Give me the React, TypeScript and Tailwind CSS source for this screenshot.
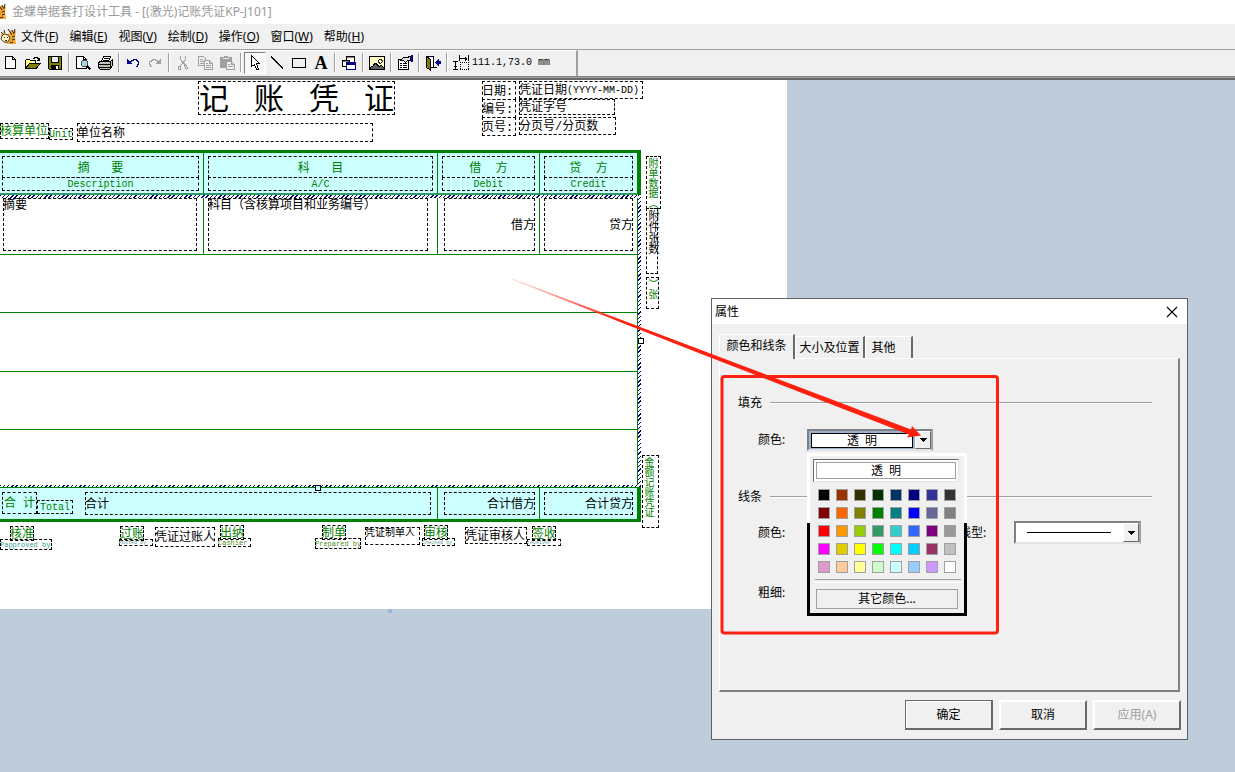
import React, { useState } from "react";
import clsx from "clsx";

const menus = [
  ["文件", "F"],
  ["编辑", "E"],
  ["视图", "V"],
  ["绘制", "D"],
  ["操作", "O"],
  ["窗口", "W"],
  ["帮助", "H"],
];

const swatches = [
  "bg-[#000000]", "bg-[#993300]", "bg-[#333300]", "bg-[#003300]", "bg-[#003366]", "bg-[#000080]", "bg-[#333399]", "bg-[#333333]",
  "bg-[#800000]", "bg-[#ff6600]", "bg-[#808000]", "bg-[#008000]", "bg-[#008080]", "bg-[#0000ff]", "bg-[#666699]", "bg-[#808080]",
  "bg-[#ff0000]", "bg-[#ff9900]", "bg-[#99cc00]", "bg-[#339966]", "bg-[#33cccc]", "bg-[#3366ff]", "bg-[#800080]", "bg-[#999999]",
  "bg-[#ff00ff]", "bg-[#e0cc00]", "bg-[#ffff00]", "bg-[#00ff00]", "bg-[#00ffff]", "bg-[#00ccff]", "bg-[#993366]", "bg-[#c0c0c0]",
  "bg-[#e099cc]", "bg-[#ffcc99]", "bg-[#ffff99]", "bg-[#ccffcc]", "bg-[#ccffff]", "bg-[#99ccff]", "bg-[#cc99ff]", "bg-[#ffffff]",
];

const green = "text-[#008000]";

// Free fields placed on the sheet, positions in sheet pixels
const fields: { text: string; box: string; style?: string }[] = [
  { text: "日期:", box: "left-[482px] top-[1px] w-[34px] h-[19px]" },
  { text: "编号:", box: "left-[482px] top-[19px] w-[34px] h-[19px]" },
  { text: "页号:", box: "left-[482px] top-[37px] w-[34px] h-[19px]" },
  { text: "凭证字号", box: "left-[519px] top-[19px] w-[96px] h-[16px]" },
  { text: "分页号/分页数", box: "left-[519px] top-[37px] w-[97px] h-[18px]" },
  { text: "核算单位", box: "left-0 top-[43px] w-[49px] h-[16px]", style: green },
  { text: "Unit", box: "left-[49px] top-[48px] w-[24px] h-[12px]", style: "text-[10px] text-[#008000]" },
  { text: "单位名称", box: "left-[77px] top-[43px] w-[296px] h-[19px]" },
  { text: "核准", box: "left-[10px] top-[446px] w-[24px] h-[15px]", style: green },
  { text: "Papproved by", box: "left-0 top-[459px] w-[52px] h-[11px]", style: "text-[7px] text-[#2f9f8f]" },
  { text: "过账", box: "left-[120px] top-[446px] w-[24px] h-[15px]", style: green },
  { text: "Posted by", box: "left-[119px] top-[459px] w-[34px] h-[7px]", style: "text-[5px] text-[#5fa08f]" },
  { text: "凭证过账人", box: "left-[155px] top-[447px] w-[60px] h-[20px]" },
  { text: "出纳", box: "left-[220px] top-[445px] w-[24px] h-[15px]", style: green },
  { text: "Cashier", box: "left-[218px] top-[458px] w-[33px] h-[9px]", style: "text-[7px] text-[#508f20]" },
  { text: "制单", box: "left-[322px] top-[445px] w-[24px] h-[15px]", style: green },
  { text: "Prepared by", box: "left-[315px] top-[458px] w-[46px] h-[11px]", style: "text-[7px] text-[#508f20]" },
  { text: "凭证制单人", box: "left-[365px] top-[447px] w-[55px] h-[18px]", style: "text-[10px] items-start" },
  { text: "审核", box: "left-[424px] top-[445px] w-[24px] h-[15px]", style: green },
  { text: "Checked by", box: "left-[422px] top-[458px] w-[33px] h-[8px]", style: "text-[5px] text-[#5fa08f]" },
  { text: "凭证审核人", box: "left-[465px] top-[447px] w-[62px] h-[17px]" },
  { text: "签收", box: "left-[532px] top-[446px] w-[24px] h-[15px]", style: green },
  { text: "receiver", box: "left-[527px] top-[459px] w-[34px] h-[7px]", style: "text-[5px] text-[#5fa08f]" },
];

const verticalFields = [
  { text: "附单数据（", box: "left-[646px] top-[76px] w-[15px] h-[53px]", style: "text-[10px] text-[#008000]" },
  { text: "附件张数", box: "left-[646px] top-[128px] w-[12px] h-[66px]", style: "text-[11px]" },
  { text: "）张", box: "left-[646px] top-[197px] w-[13px] h-[32px]", style: "text-[10px] text-[#008000]" },
  { text: "金额记账凭证", box: "left-[642px] top-[375px] w-[17px] h-[73px]", style: "text-[10px] text-[#008000]" },
];

const hatch = "bg-[repeating-linear-gradient(135deg,#000080_0_1px,#ffffff_1px_3px)]";
const dash = "pt-[2px] outline-1 -outline-offset-1 outline-dashed outline-black";

const Svg = ({ children }: { children: React.ReactNode }) => (
  <svg width="16" height="16" viewBox="0 0 16 16" fill="none" stroke="#000" shapeRendering="crispEdges">
    {children}
  </svg>
);

const NewIcon = () => (
  <Svg>
    <path d="M2.5 1.5H9.5L12.5 4.5V13.5H2.5Z" fill="#fff" />
    <path d="M9.5 1.5V4.5H12.5" />
  </Svg>
);
const OpenIcon = () => (
  <Svg>
    <path d="M.5 13.5V5.5L1.5 4.5H4.5L5.5 5.5H10.5V7.5" fill="#ffff80" />
    <path d="M.5 13.5L4.5 8.5H15.5L11 13.5Z" fill="#808000" />
    <path d="M8 3H9V2H12V3H13V4H14M12 5.5H15M14.5 3V6" />
  </Svg>
);
const SaveIcon = () => (
  <Svg>
    <path d="M1.5 1.5H14.5V14.5H2.5L1.5 13.5Z" fill="#808000" />
    <path d="M4.5 2V7.5H11.5V2" fill="#f0f0f0" />
    <path d="M4 10H12V14H4Z" fill="#000" stroke="none" />
    <path d="M9 11H11V14H9Z" fill="#fff" stroke="none" />
  </Svg>
);
const PreviewIcon = () => (
  <Svg>
    <path d="M1.5 1.5H8.5L11.5 4.5V13.5H1.5Z" fill="#fff" />
    <path d="M8.5 1.5V4.5H11.5" />
    <circle cx="9.5" cy="8.5" r="3.2" fill="#a0d8e0" stroke="#505050" />
    <path d="M12 11L15.5 14.5" strokeWidth="2" />
  </Svg>
);
const PrintIcon = () => (
  <Svg>
    <path d="M4.5 6.5L6.5 1.5H13.5L11.5 6.5" fill="#fff" />
    <path d="M7 3.5H12M6 5.5H11" />
    <path d="M1.5 7.5L3.5 6.5H13.5L15.5 4.5V10.5L12.5 14.5H3.5L1.5 12.5Z" fill="#c0c0c0" />
    <path d="M1 9.5H13M2 12.5H13M13.5 7V14M3 14.5H12" />
    <path d="M9 10.5H12" stroke="#c0c000" />
  </Svg>
);
const UndoIcon = ({ redo }: { redo?: boolean }) => (
  <Svg>
    <g transform={redo ? "matrix(-1 0 0 1 16 0)" : undefined} stroke={redo ? "#a0a0a0" : "#000080"}>
      <path d="M2 4V9H7V8H6V7H5V6H4V5H3V4Z" fill={redo ? "#a0a0a0" : "#000080"} stroke="none" />
      <path d="M5 6.5H6V5.5H8V4.5H11V5.5H12V6.5H13.5V9.5H12.5V11.5H11" />
    </g>
  </Svg>
);
const CutIcon = () => (
  <Svg>
    <g stroke="#a0a0a0">
      <path d="M5.5 1V4L8.5 9M10.5 1V4L7.5 9M7.5 8L5.5 11M8.5 8L10.5 10" />
      <path d="M3.5 11.5H5.5V14.5H3.5ZM9.5 10.5H11.5L12.5 13.5H10.5Z" />
    </g>
  </Svg>
);
const CopyIcon = () => (
  <Svg>
    <g stroke="#a0a0a0">
      <path d="M1.5 1.5H6.5L8.5 3.5V10.5H1.5Z" fill="#f0f0f0" />
      <path d="M3 4.5H6M3 6.5H7M3 8.5H7" />
      <path d="M7.5 5.5H12.5L15.5 8.5V14.5H7.5Z" fill="#f0f0f0" />
      <path d="M12.5 5.5V8.5H15.5M9 8.5H11M9 10.5H14M9 12.5H14" />
    </g>
  </Svg>
);
const PasteIcon = () => (
  <Svg>
    <path d="M1 2H5V1H9V2H13V7H8V13H1Z" fill="#a0a0a0" stroke="none" />
    <path d="M4 3.5H10" stroke="#f0f0f0" />
    <path d="M7.5 6.5H12.5L15.5 9.5V14.5H7.5Z" fill="#f0f0f0" stroke="#a0a0a0" />
    <path d="M9 9.5H11M9 11.5H14M12.5 7V9.5H15" stroke="#a0a0a0" />
  </Svg>
);
const PointerIcon = () => (
  <Svg>
    <path d="M4.5 .5V11.5L7.5 9.5L9.5 14.5H11.5L9.5 8.5H12.5Z" fill="#fff" />
  </Svg>
);
const LineIcon = () => (
  <Svg>
    <path d="M2 2L14 13" strokeWidth="1.4" />
  </Svg>
);
const RectIcon = () => (
  <Svg>
    <path d="M1.5 3.5H14.5V12.5H1.5Z" />
  </Svg>
);
const WindowsIcon = () => (
  <Svg>
    <path d="M5.5 1.5H13.5V7.5H5.5Z" fill="#fff" />
    <path d="M6 2.5H13" stroke="#808080" />
    <path d="M1.5 5.5H8.5V11.5H1.5Z" fill="#fff" />
    <path d="M2 6.5H8" stroke="#808080" />
    <path d="M5.5 8.5H14.5V14.5H5.5Z" fill="#fff" stroke="#000080" />
    <path d="M5 7H15V10H5Z" fill="#000080" stroke="none" />
  </Svg>
);
const PictureIcon = () => (
  <Svg>
    <path d="M.5 1.5H15.5V14.5H.5Z" fill="#ffffc0" />
    <path d="M10 4H12V5H13V7H12V8H10V7H9V5H10Z" fill="#fff" strokeWidth=".8" />
    <path d="M1 13L3 11H4L6 8H7L10 12L12 10L15 13V14H1Z" fill="#606060" stroke="#000" />
  </Svg>
);
const PropsIcon = () => (
  <Svg>
    <path d="M1.5 4.5H11.5V14.5H1.5Z" fill="#fff" />
    <path d="M3 8.5H5M6 8.5H10M3 10.5H5M6 10.5H10M3 12.5H5M6 12.5H10" />
    <path d="M3.5 5.5L6.5 2.5H9.5L13.5 1.5V5.5H10.5L8.5 7.5L6.5 5.5Z" fill="#e0e0e0" />
    <path d="M14 0H16V7H14Z" fill="#000080" stroke="none" />
  </Svg>
);
const ExitIcon = () => (
  <Svg>
    <path d="M1.5 1.5H8.5V12.5H1.5Z" fill="#fff" />
    <path d="M1.5 1.5L5.5 4.5V15L1.5 12.5Z" fill="#808000" />
    <path d="M9 12.5H12" />
    <path d="M10 7H11V6H12V5H13V4H14V6H16V9H14V11H13V10H12V9H11V8H10Z" fill="#000080" stroke="none" />
  </Svg>
);
const PositionIcon = () => (
  <Svg>
    <path d="M6.5 0V6M15.5 0V6M7 3.5H14M12.5 1.5V5.5M13.5 2.5V4.5M0 6.5H5M2.5 7V14M1 11.5H4M0 14.5H5" />
    <path d="M7 7.5H16M7 14.5H16M7.5 7V15M15.5 7V15" strokeDasharray="1 1" />
  </Svg>
);

const LetterIcon = () => (
  <span className="font-['Liberation_Serif',serif] text-[18px] leading-4 font-bold">A</span>
);

const toolGroups: { label: string; icon: React.ReactNode; pressed?: boolean }[][] = [
  [
    { label: "新建", icon: <NewIcon /> },
    { label: "打开", icon: <OpenIcon /> },
    { label: "保存", icon: <SaveIcon /> },
  ],
  [
    { label: "预览", icon: <PreviewIcon /> },
    { label: "打印", icon: <PrintIcon /> },
  ],
  [
    { label: "撤销", icon: <UndoIcon /> },
    { label: "重做", icon: <UndoIcon redo /> },
  ],
  [
    { label: "剪切", icon: <CutIcon /> },
    { label: "复制", icon: <CopyIcon /> },
    { label: "粘贴", icon: <PasteIcon /> },
  ],
  [
    { label: "选择", icon: <PointerIcon />, pressed: true },
    { label: "直线", icon: <LineIcon /> },
    { label: "矩形", icon: <RectIcon /> },
    { label: "文本", icon: <LetterIcon /> },
  ],
  [{ label: "层次", icon: <WindowsIcon /> }],
  [{ label: "图片", icon: <PictureIcon /> }],
  [{ label: "属性", icon: <PropsIcon /> }],
  [{ label: "退出", icon: <ExitIcon /> }],
];

const Tiger = () => (
  <svg width="18" height="18" viewBox="0 0 18 18" className="shrink-0">
    <path d="M1 7L3 4L6 6H9L11 2L14 4L16 3L15 9L16 16H9L5 15L1 12Z" fill="#f5a623" />
    <path d="M2 8L4 6L8 7L10 10L8 14L4 14L1 11Z" fill="#fff3c4" stroke="#222" strokeWidth=".8" />
    <path d="M10 4L12 7M12 2L14 6M15 1L14 5M12 9L15 8M12 12L15 11M10 15L13 14M8 1L10 4M4 2L5 5M1 4L3 6" stroke="#222" />
    <path d="M4 9H5V10H4ZM7 9H8V10H7ZM5 12H7V13H5Z" fill="#222" />
  </svg>
);

const Divider = () => (
  <span className="flex w-[6px] justify-center self-stretch py-[2px]">
    <span className="w-[2px] border-r border-l border-r-white border-l-[#a0a0a0]" />
  </span>
);

const HeadCell = ({ title, sub, pad }: { title: string; sub: string; pad: string }) => (
  <th className="h-[42px] border-r border-b-2 border-r-[#008000] border-b-[#339966] bg-[#ccffff] p-0 align-top font-normal">
    <div className={clsx("flex flex-col pt-[3px] text-[#008000]", pad)}>
      <span className={clsx(dash, "h-[22px] text-center leading-[22px] whitespace-pre")}>{title}</span>
      <span className={clsx(dash, "-mt-px h-[14px] text-center text-[10px] leading-[12px]")}>{sub}</span>
    </div>
  </th>
);

const cellBorder = "border-r border-b border-[#008000] p-0 align-top";
const totalCell = "h-[35px] border-t border-r border-b-3 border-[#008000] bg-[#ccffff] p-0 align-top";

function Voucher() {
  return (
    <table className="absolute top-[70px] left-0 w-[641px] table-fixed border-separate border-spacing-0 border-t-3 border-[#008000]">
      <colgroup>
        <col className="w-[204px]" />
        <col className="w-[234px]" />
        <col className="w-[102px]" />
        <col className="w-[98px]" />
        <col className="w-[3px]" />
      </colgroup>
      <thead>
        <tr>
          <HeadCell title="摘   要" sub="Description" pad="pl-[2px] pr-[4px]" />
          <HeadCell title="科   目" sub="A/C" pad="px-[4px]" />
          <HeadCell title="借  方" sub="Debit" pad="px-[4px]" />
          <HeadCell title="贷  方" sub="Credit" pad="px-[4px]" />
          <td className="bg-[#008000] p-0" />
        </tr>
      </thead>
      <tbody>
        <tr>
          <td colSpan={4} className={clsx("h-[3px] p-0", hatch)} />
          <td rowSpan={7} className={clsx("p-0", hatch)} />
        </tr>
        <tr>
          <td className={clsx(cellBorder, "h-[57px] pr-[6px] pl-[3px]")}>
            <div className={clsx(dash, "h-[53px] leading-3")}>摘要</div>
          </td>
          <td className={clsx(cellBorder, "pr-[9px] pl-[4px]")}>
            <div className={clsx(dash, "h-[53px] leading-3")}>科目（含核算项目和业务编号）</div>
          </td>
          <td className={clsx(cellBorder, "pr-[4px] pl-[6px]")}>
            <div className={clsx(dash, "flex h-[53px] items-center justify-end")}>借方</div>
          </td>
          <td className={clsx(cellBorder, "px-[4px]")}>
            <div className={clsx(dash, "flex h-[53px] items-center justify-end")}>贷方</div>
          </td>
        </tr>
        <tr><td colSpan={4} className={clsx(cellBorder, "h-[58px]")} /></tr>
        <tr><td colSpan={4} className={clsx(cellBorder, "h-[59px]")} /></tr>
        <tr><td colSpan={4} className={clsx(cellBorder, "h-[58px]")} /></tr>
        <tr><td colSpan={4} className="h-[55px] border-r border-[#008000] p-0" /></tr>
        <tr><td colSpan={4} className={clsx("h-[2px] p-0", hatch)} /></tr>
      </tbody>
      <tfoot>
        <tr>
          <td colSpan={2} className={totalCell}>
            <div className="flex pt-[4px] pr-[6px] pl-[2px] text-[#008000]">
              <span className={clsx(dash, "flex h-[22px] w-[35px] items-center justify-center whitespace-pre")}>合 计</span>
              <span className={clsx(dash, "mt-[8px] flex h-[14px] w-[36px] items-center justify-center text-[10px]")}>Total</span>
              <span className={clsx(dash, "ml-[12px] flex h-[23px] flex-1 items-center text-black")}>合计</span>
            </div>
          </td>
          <td className={clsx(totalCell, "pt-[4px] pr-[4px] pl-[6px]")}>
            <div className={clsx(dash, "flex h-[23px] items-center justify-end")}>合计借方</div>
          </td>
          <td className={clsx(totalCell, "px-[4px] pt-[4px]")}>
            <div className={clsx(dash, "flex h-[23px] items-center justify-end")}>合计贷方</div>
          </td>
          <td className="bg-[#008000] p-0" />
        </tr>
      </tfoot>
    </table>
  );
}

function Sheet() {
  return (
    <div className="relative h-[529px] w-[787px] bg-white font-['Liberation_Mono','Noto_Sans_CJK_SC',monospace] text-[12px] leading-none text-black">
      <h1 className={clsx(dash, "absolute top-[1px] left-[198px] flex h-[34px] w-[197px] items-center justify-center font-['Liberation_Sans','Noto_Sans_CJK_SC',sans-serif] text-[30px] whitespace-pre")}>
        记   账   凭   证
      </h1>
      <div className={clsx(dash, "absolute top-[1px] left-[519px] flex h-[18px] w-[124px] items-center whitespace-nowrap")}>
        凭证日期<span className="text-[10px]">(YYYY-MM-DD)</span>
      </div>
      {fields.map((f) => (
        <div key={f.text} className={clsx(dash, "absolute flex whitespace-nowrap", f.box, f.style, !f.style?.includes("items-start") && "items-center")}>
          {f.text}
        </div>
      ))}
      {verticalFields.map((f) => (
        <div key={f.text} className={clsx(dash, "absolute whitespace-nowrap [writing-mode:vertical-lr]", f.box, f.style)}>
          {f.text}
        </div>
      ))}
      <Voucher />
      {/* selection handles */}
      <span className="absolute top-[258px] left-[638px] size-[6px] border border-black bg-white" />
      <span className="absolute top-[405px] left-[315px] size-[6px] border border-black bg-[#ccffff]" />
      <span className="absolute top-[529px] left-[388px] size-[4px] bg-[#99b4d8]" />
    </div>
  );
}

const SectionTitle = ({ children }: { children: React.ReactNode }) => (
  <div className="flex h-4 items-center gap-2">
    <h2>{children}</h2>
    <span className="h-[2px] flex-1 border-t border-b border-t-[#a0a0a0] border-b-white" />
  </div>
);

const DropArrow = () => (
  <span className="pointer-events-none absolute inset-y-0 right-0 flex w-[16px] items-center justify-center border border-t-white border-r-[#696969] border-b-[#696969] border-l-white bg-[#f0f0f0]">
    <svg width="7" height="4" viewBox="0 0 7 4" shapeRendering="crispEdges">
      <path d="M0 0H7V1H6V2H5V3H4V4H3V3H2V2H1V1H0Z" />
    </svg>
  </span>
);

const sunken = "border-2 border-t-[#808080] border-r-[#a0a0a0] border-b-[#e3e3e3] border-l-[#808080]";

function Palette() {
  return (
    <div className="absolute top-[22px] left-[-2px] z-10 w-[160px] bg-[linear-gradient(white_70px,black_70px)] p-[3px]">
      <div className="flex flex-col bg-[#f0f0f0] px-[3px] pt-[3px] pb-[4px]">
        <button className="flex h-[23px] w-[146px] border border-t-[#696969] border-r-[#e3e3e3] border-b-[#e3e3e3] border-l-[#696969] bg-white p-[2px]">
          <span className="flex flex-1 items-center justify-center self-stretch border border-[#a0a0a0]">透&nbsp; 明</span>
        </button>
        <div className="mt-[7px] grid grid-cols-[repeat(8,12px)] gap-[6px] pl-[5px]">
          {swatches.map((c) => (
            <button key={c} aria-label={c.slice(4, -1)} className={clsx("size-[12px] border border-[#a0a0a0]", c)} />
          ))}
        </div>
        <span className="mt-[6px] ml-[2px] h-[4px] border-t border-b border-t-[#a0a0a0] border-b-white" />
        <button className="mt-[6px] ml-[3px] h-[20px] w-[142px] border border-[#a0a0a0]">其它颜色...</button>
      </div>
    </div>
  );
}

const dialogButton = "h-[30px] w-[88px] border-2 border-t-white border-r-[#696969] border-b-[#696969] border-l-white";

function PropertiesDialog() {
  const [tab, setTab] = useState(0);

  return (
    <section className="absolute top-[218px] left-[711px] w-[477px] border border-[#5b6268] bg-[#f0f0f0] text-[12px] leading-4">
      <header className="flex h-[25px] items-center justify-between bg-white pr-[9px] pl-[3px]">
        <span>属性</span>
        <button aria-label="关闭">
          <svg width="12" height="12" viewBox="0 0 12 12" stroke="#000" strokeWidth="1.1">
            <path d="M1 1L11 11M11 1L1 11" />
          </svg>
        </button>
      </header>
      <div className="px-[7px] pt-[10px] pb-[9px]">
        <div role="tablist" className="flex h-[24px] items-end">
          {["颜色和线条", "大小及位置", "其他"].map((name, i) => (
            <button
              key={name}
              role="tab"
              aria-selected={tab === i}
              onClick={() => setTab(i)}
              className={clsx(
                "border-t border-r-2 border-l border-t-white border-r-[#696969] border-l-white",
                i === 2 ? "w-[48px] pr-[10px]" : i === 1 ? "w-[70px]" : "w-[76px]",
                tab === i ? "relative -mb-px h-[25px] bg-[#f0f0f0] pb-[2px]" : "h-[22px]"
              )}
            >
              {name}
            </button>
          ))}
        </div>
        <div className="h-[334px] border border-t-white border-r-2 border-r-[#808080] border-b-2 border-b-[#808080] border-l-white pt-[36px] pr-[26px] pl-[18px]">
          <SectionTitle>填充</SectionTitle>
          <div className="mt-[18px] flex h-[22px] items-center pl-[20px]">
            <label htmlFor="fill" className="w-[49px]">颜色:</label>
            <div className={clsx("relative h-[22px] w-[126px] bg-[#99b4d1] pt-[2px] pr-[18px] pb-[1px] pl-[2px]", sunken)}>
              <select id="fill" className="block h-[15px] w-full appearance-none border border-black bg-white text-center leading-[13px] [text-align-last:center]">
                <option>透&nbsp; 明</option>
              </select>
              <DropArrow />
              <Palette />
            </div>
          </div>
          <div className="mt-[38px]">
            <SectionTitle>线条</SectionTitle>
          </div>
          <div className="mt-[16px] flex h-[23px] items-center pl-[20px]">
            <span className="w-[201px]">颜色:</span>
            <label htmlFor="dash" className="w-[55px]">线型:</label>
            <div className={clsx("relative h-[23px] w-[127px] bg-white", sunken)}>
              <select id="dash" className="block size-full appearance-none">
                <option></option>
              </select>
              <span className="pointer-events-none absolute top-[9px] left-[11px] h-px w-[84px] bg-black" />
              <DropArrow />
            </div>
          </div>
          <div className="mt-[41px] pl-[20px]">粗细:</div>
        </div>
        <div className="mt-[8px] -mr-px flex justify-end gap-[6px]">
          <button className="h-[30px] w-[88px] border border-r-2 border-b-2 border-[#696969] shadow-[inset_1px_1px_0_white]">确定</button>
          <button className={dialogButton}>取消</button>
          <button disabled className={clsx(dialogButton, "text-[#a0a0a0]")}>应用(A)</button>
        </div>
      </div>
    </section>
  );
}

// Red callout: frame round the fill options and an arrow to the drop-down
function Callout() {
  return (
    <svg className="pointer-events-none absolute top-0 left-0 z-20" width="1010" height="570" viewBox="0 80 1010 570">
      <defs>
        <linearGradient id="fade" gradientUnits="userSpaceOnUse" x1="512" y1="279" x2="620" y2="320">
          <stop offset="0" stopColor="#ff2010" stopOpacity="0.15" />
          <stop offset="1" stopColor="#ff2010" />
        </linearGradient>
      </defs>
      <rect x="722" y="376.500" width="275.500" height="256.500" rx="2.500" fill="none" stroke="#ff2010" strokeWidth="3" />
      <path d="M512 278.500L911 429.500L912 426L921 435.500L907 437.500L909 434.500L700 353.500L512 279.500Z" fill="url(#fade)" />
    </svg>
  );
}

export default function App() {
  return (
    <div className="flex min-h-screen flex-col overflow-hidden bg-[#bfccda] font-['Noto_Sans','Noto_Sans_CJK_SC',sans-serif] text-[12px] leading-4 text-black">
      <header className="flex h-6 items-center overflow-hidden bg-white text-[#999999]">
        <span className="flex w-3 justify-end overflow-hidden pr-1">
          <Tiger />
        </span>
        金蝶单据套打设计工具 - [(激光)记账凭证KP-J101]
      </header>
      <nav className="flex h-[25px] items-center bg-[#f0f0f0]">
        <Tiger />
        <div className="flex gap-[11px] pl-[3px]">
          {menus.map(([name, key]) => (
            <button key={key}>
              {name}(<u>{key}</u>)
            </button>
          ))}
        </div>
      </nav>
      <div className="flex h-[27px] border-t border-[#a0a0a0] bg-[#f0f0f0]">
        <div className="flex w-[578px] items-center border-t border-r-2 border-t-white border-r-[#a0a0a0] pb-[2px]">
          {toolGroups.map((group, i) => (
            <React.Fragment key={i}>
              {group.map((t) => (
                <button
                  key={t.label}
                  aria-label={t.label}
                  className={clsx(
                    "flex h-[22px] w-[22px] items-center justify-center",
                    t.pressed && "border border-t-[#808080] border-r-white border-b-white border-l-[#808080] bg-[#f8f8f8]"
                  )}
                >
                  {t.icon}
                </button>
              ))}
              <Divider />
            </React.Fragment>
          ))}
          <span className="flex w-[22px] justify-center">
            <PositionIcon />
          </span>
          <span className="pt-px font-['Liberation_Mono',monospace] text-[10px]">111.1,73.0 mm</span>
        </div>
      </div>
      <div className="h-[4px] border-t border-b-2 border-t-[#808080] border-b-[#696969] bg-[#a0a0a0]" />
      <main className="relative flex-1">
        <Sheet />
        <PropertiesDialog />
        <Callout />
      </main>
    </div>
  );
}
